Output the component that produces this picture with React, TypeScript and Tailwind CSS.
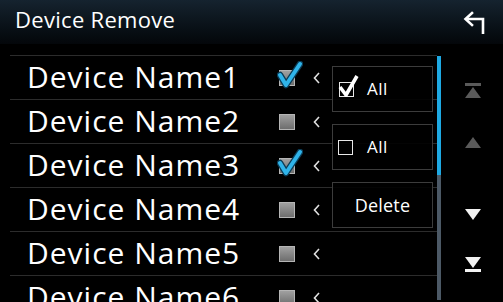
import React from "react";

const devices = [
  { name: "Device Name1", checked: true },
  { name: "Device Name2", checked: false },
  { name: "Device Name3", checked: true },
  { name: "Device Name4", checked: false },
  { name: "Device Name5", checked: false },
  { name: "Device Name6", checked: false },
];

function BackIcon() {
  return (
    <svg width="24" height="24" viewBox="0 0 24 24" fill="none">
      <path d="M21 23V8H4" stroke="#fff" strokeWidth="2.6" strokeLinejoin="miter" />
      <path d="M10 2L3.5 8L10 14" stroke="#fff" strokeWidth="2.6" strokeLinecap="square" />
    </svg>
  );
}

function RowCheck({ checked }: { checked: boolean }) {
  return (
    <div className="relative w-[16px] h-[16px]">
      <div className="w-full h-full border border-[#b5b5b5] bg-gradient-to-b from-[#a0a0a0] to-[#6e6e6e]" />
      {checked && (
        <svg className="absolute left-[-2px] top-[-9px]" width="26" height="28" viewBox="0 0 26 28" fill="none">
          <path d="M3 14L9 24L23 3" stroke="#0b3d57" strokeWidth="6.5" strokeLinejoin="round" strokeLinecap="round" />
          <path d="M3 14L9 24L23 3" stroke="#2fb4ea" strokeWidth="4" strokeLinejoin="round" strokeLinecap="round" />
        </svg>
      )}
    </div>
  );
}

function Chevron() {
  return (
    <svg width="7" height="12" viewBox="0 0 7 12" fill="none">
      <path d="M6 1L1.5 6L6 11" stroke="#e0e0e0" strokeWidth="1.6" />
    </svg>
  );
}

function BoxCheck({ checked }: { checked: boolean }) {
  return (
    <div className="relative w-[15px] h-[15px] border-[1.5px] border-[#e8e8e8]">
      {checked && (
        <svg className="absolute left-[-2px] top-[-10px]" width="22" height="26" viewBox="0 0 22 26" fill="none">
          <path d="M2 14L8 22L19 3" stroke="#fff" strokeWidth="3.6" strokeLinejoin="round" />
        </svg>
      )}
    </div>
  );
}

export default function DeviceRemoveScreen() {
  return (
    <div className="w-[503px] h-[302px] bg-black overflow-hidden font-['Open_Sans',sans-serif] text-white">
      <div className="h-[44px] flex items-center justify-between pl-[15px] pr-[17px] bg-gradient-to-b from-[#15232f] to-[#04070a]">
        <p className="text-[22px] font-medium tracking-[0.3px] leading-none mt-[-6px]">Device Remove</p>
        <div className="mt-[2px]"><BackIcon /></div>
      </div>

      <div className="flex h-[258px]">
        <div className="relative w-[427px] ml-[10px] pt-[11px]">
          {devices.map((item, key) =>
            <div key={key} className="h-[44px] border-t border-[#2c2c2c] flex items-center">
              <p className="w-[269px] pl-[17px] text-[30px] font-medium tracking-[1px] leading-none whitespace-nowrap mt-[-2px]">{item.name}</p>
              <RowCheck checked={item.checked} />
              <div className="ml-[18px]"><Chevron /></div>
            </div>
          )}

          <div className="absolute left-[322px] top-[22px] w-[101px] flex flex-col gap-[12px]">
            <div className="h-[46px] border border-[#3c3c3c] bg-black/90 flex items-center pl-[6px] gap-[13px]">
              <BoxCheck checked={true} />
              <span className="text-[17px] font-medium tracking-[0.5px]">All</span>
            </div>
            <div className="h-[46px] border border-[#3c3c3c] bg-black/90 flex items-center pl-[5px] gap-[14px]">
              <BoxCheck checked={false} />
              <span className="text-[17px] font-medium tracking-[0.5px]">All</span>
            </div>
            <div className="h-[46px] border border-[#3c3c3c] bg-black/90 flex items-center justify-center">
              <span className="text-[18px] font-medium tracking-[0.2px]">Delete</span>
            </div>
          </div>
        </div>

        <div className="w-[4px] mt-[12px] mb-[2px] flex flex-col">
          <div className="h-[119px] bg-[#1ea9e3]" />
          <div className="flex-1 bg-[#4c5966]" />
        </div>

        <div className="flex-1 flex flex-col items-center pt-[39px] pl-[2px]">
          <svg width="16" height="15" viewBox="0 0 16 15">
            <rect x="0" y="0" width="16" height="3" fill="#5a5a5a" />
            <path d="M8 4L16 15H0Z" fill="#5a5a5a" />
          </svg>
          <svg className="mt-[39px]" width="16" height="11" viewBox="0 0 16 11">
            <path d="M8 0L16 11H0Z" fill="#5a5a5a" />
          </svg>
          <svg className="mt-[61px]" width="16" height="11" viewBox="0 0 16 11">
            <path d="M0 0H16L8 11Z" fill="#f2f2f2" />
          </svg>
          <svg className="mt-[37px]" width="16" height="15" viewBox="0 0 16 15">
            <path d="M0 0H16L8 11Z" fill="#f2f2f2" />
            <rect x="0" y="12" width="16" height="3" fill="#f2f2f2" />
          </svg>
        </div>
      </div>
    </div>
  );
}
